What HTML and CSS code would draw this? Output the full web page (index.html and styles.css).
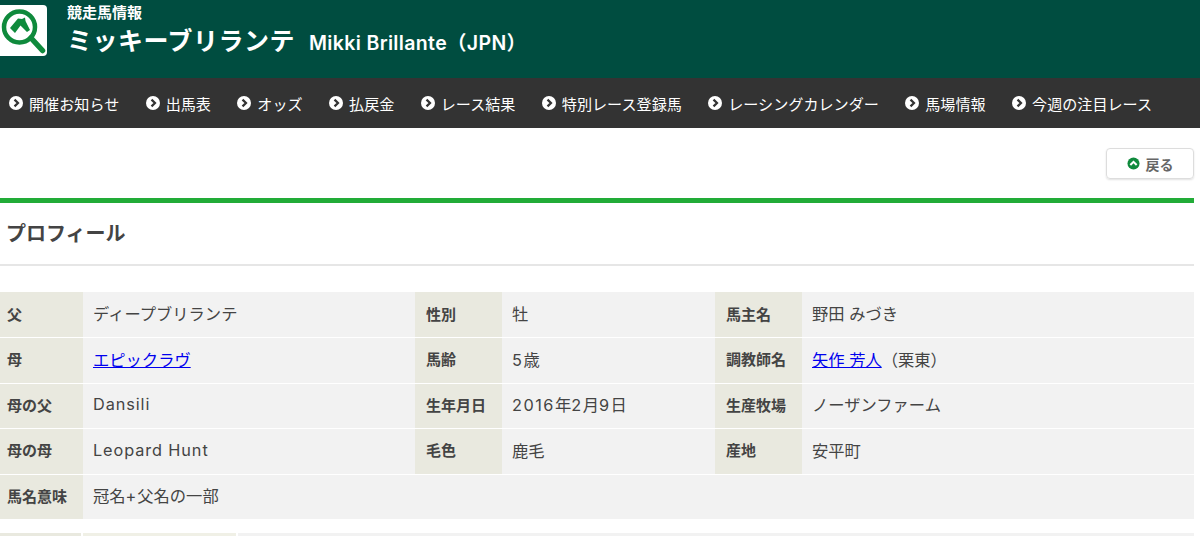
FILE: index.html
```html
<!DOCTYPE html>
<html lang="ja">
<head>
<meta charset="utf-8">
<title>ミッキーブリランテ</title>
<link rel="stylesheet" href="styles.css">
</head>
<body>
<header class="site-header">
  <div class="logo">
    <svg width="47" height="51" viewBox="0 0 47 51">
      <circle cx="19.5" cy="22" r="15.5" fill="none" stroke="#0f8a3c" stroke-width="4.5"/>
      <path d="M31 33 L42.5 45.5" stroke="#0f8a3c" stroke-width="5.5" stroke-linecap="round"/>
      <path d="M10 23 L18 13.5 L22 14 L25 12.5 L25.5 16 L30 25 L27 27 L20.5 20.5 L15 28 Z" fill="#0f8a3c"/>
    </svg>
  </div>
  <div class="titles">
    <div class="subtitle">競走馬情報</div>
    <h1 class="horse"><span class="jp">ミッキーブリランテ</span><span class="en">Mikki Brillante（JPN）</span></h1>
  </div>
</header>
<nav class="nav">
  <a class="nav-item"><svg class="dot" viewBox="0 0 14 14"><circle cx="7" cy="7" r="7" fill="#fff"/><path d="M5.5 3.6 L9 7 L5.5 10.4" fill="none" stroke="#333" stroke-width="2.2"/></svg>開催お知らせ</a>
  <a class="nav-item"><svg class="dot" viewBox="0 0 14 14"><circle cx="7" cy="7" r="7" fill="#fff"/><path d="M5.5 3.6 L9 7 L5.5 10.4" fill="none" stroke="#333" stroke-width="2.2"/></svg>出馬表</a>
  <a class="nav-item"><svg class="dot" viewBox="0 0 14 14"><circle cx="7" cy="7" r="7" fill="#fff"/><path d="M5.5 3.6 L9 7 L5.5 10.4" fill="none" stroke="#333" stroke-width="2.2"/></svg>オッズ</a>
  <a class="nav-item"><svg class="dot" viewBox="0 0 14 14"><circle cx="7" cy="7" r="7" fill="#fff"/><path d="M5.5 3.6 L9 7 L5.5 10.4" fill="none" stroke="#333" stroke-width="2.2"/></svg>払戻金</a>
  <a class="nav-item"><svg class="dot" viewBox="0 0 14 14"><circle cx="7" cy="7" r="7" fill="#fff"/><path d="M5.5 3.6 L9 7 L5.5 10.4" fill="none" stroke="#333" stroke-width="2.2"/></svg>レース結果</a>
  <a class="nav-item"><svg class="dot" viewBox="0 0 14 14"><circle cx="7" cy="7" r="7" fill="#fff"/><path d="M5.5 3.6 L9 7 L5.5 10.4" fill="none" stroke="#333" stroke-width="2.2"/></svg>特別レース登録馬</a>
  <a class="nav-item"><svg class="dot" viewBox="0 0 14 14"><circle cx="7" cy="7" r="7" fill="#fff"/><path d="M5.5 3.6 L9 7 L5.5 10.4" fill="none" stroke="#333" stroke-width="2.2"/></svg>レーシングカレンダー</a>
  <a class="nav-item"><svg class="dot" viewBox="0 0 14 14"><circle cx="7" cy="7" r="7" fill="#fff"/><path d="M5.5 3.6 L9 7 L5.5 10.4" fill="none" stroke="#333" stroke-width="2.2"/></svg>馬場情報</a>
  <a class="nav-item"><svg class="dot" viewBox="0 0 14 14"><circle cx="7" cy="7" r="7" fill="#fff"/><path d="M5.5 3.6 L9 7 L5.5 10.4" fill="none" stroke="#333" stroke-width="2.2"/></svg>今週の注目レース</a>
</nav>
<main class="main">
  <div class="back-row">
    <a class="back"><svg class="back-icon" viewBox="0 0 14 14"><circle cx="7" cy="7" r="6.5" fill="#0f8a3c"/><path d="M3.6 8.6 L7 5.2 L10.4 8.6" fill="none" stroke="#fff" stroke-width="2.2"/></svg>戻る</a>
  </div>
  <section class="profile">
    <h2 class="profile-title">プロフィール</h2>
    <table class="table">
      <colgroup><col class="c1"><col class="c2"><col class="c3"><col class="c4"><col class="c5"><col class="c6"></colgroup>
      <tr><th>父</th><td>ディープブリランテ</td><th>性別</th><td>牡</td><th>馬主名</th><td>野田 みづき</td></tr>
      <tr><th>母</th><td><a class="link">エピックラヴ</a></td><th>馬齢</th><td><span class="num">5</span>歳</td><th>調教師名</th><td><a class="link">矢作 芳人</a>（栗東）</td></tr>
      <tr><th>母の父</th><td><span class="lat">Dansili</span></td><th>生年月日</th><td><span class="num">2016</span>年<span class="num">2</span>月<span class="num">9</span>日</td><th>生産牧場</th><td>ノーザンファーム</td></tr>
      <tr><th>母の母</th><td><span class="lat">Leopard Hunt</span></td><th>毛色</th><td>鹿毛</td><th>産地</th><td>安平町</td></tr>
      <tr><th>馬名意味</th><td colspan="5">冠名<span class="lat">+</span>父名の一部</td></tr>
    </table>
    <div class="next-head">
      <div class="nh1"></div><div class="nh2"></div><div class="nh3"></div>
    </div>
  </section>
</main>
</body>
</html>
```
FILE: styles.css
```css
html, body {
  margin: 0;
  padding: 0;
  height: 536px;
  overflow: hidden;
  background: #fff;
}
body {
  font-family: "Inter", "Noto Sans CJK JP", sans-serif;
  color: #333;
}
.site-header {
  height: 78px;
  background: #004d40;
  display: flex;
  align-items: flex-start;
  box-sizing: border-box;
  padding-top: 5px;
}
.logo {
  width: 47px;
  height: 51px;
  background: #fff;
  border-radius: 0 4px 4px 0;
  flex: none;
}
.titles {
  margin-left: 20px;
  color: #fff;
}
.subtitle {
  font-size: 15px;
  font-weight: 700;
  line-height: 16px;
  margin-bottom: 3px;
}
.horse {
  margin: 0;
  font-weight: 700;
  display: flex;
  align-items: baseline;
  line-height: 34px;
}
.jp {
  font-size: 25px;
  letter-spacing: 0.5px;
}
.en {
  font-size: 19.5px;
  margin-left: 14px;
  font-weight: 600;
  letter-spacing: .35px;
}
.nav {
  height: 50px;
  background: #333;
  display: flex;
  align-items: center;
  padding-left: 9px;
  gap: 26.4px;
}
.nav-item {
  display: flex;
  align-items: center;
  color: #fff;
  font-size: 15.1px;
  white-space: nowrap;
}
.dot {
  width: 14px;
  height: 14px;
  margin-right: 6px;
  flex: none;
}
.main {
  width: 1194px;
}
.back-row {
  display: flex;
  justify-content: flex-end;
  align-items: flex-start;
  padding-top: 20px;
  height: 50px;
}
.back {
  width: 86px;
  height: 29px;
  border: 1px solid #ddd;
  border-radius: 4px;
  box-shadow: 0 1px 2px rgba(0,0,0,.12);
  display: flex;
  align-items: center;
  justify-content: center;
  font-size: 14px;
  font-weight: 700;
  color: #666;
}
.back-icon {
  width: 13px;
  height: 13px;
  margin-right: 6px;
}
.profile {
  border-top: 5px solid #22ac38;
}
.profile-title {
  margin: 0;
  height: 63px;
  line-height: 63px;
  font-size: 20px;
  font-weight: 700;
  padding-left: 6px;
  color: #444;
  border-bottom: 2px solid #e6e6e6;
  box-sizing: border-box;
}
.table {
  margin-top: 26px;
  width: 1194px;
  table-layout: fixed;
  border-collapse: collapse;
  font-size: 16.3px;
}
.c1 { width: 83px; }
.c2 { width: 332px; }
.c3 { width: 87px; }
.c4 { width: 213px; }
.c5 { width: 87px; }
.c6 { width: 392px; }
.table tr {
  height: 45.5px;
  border-bottom: 1px solid #fff;
}
.table th {
  background: #e9e9df;
  text-align: left;
  padding: 0 0 3px 7px;
  font-size: 15px;
  font-weight: 700;
  color: #444;
}
.table td + th {
  padding-left: 11px;
}
.table td {
  background: #f2f2f2;
  padding: 0 0 3px 10px;
  color: #444;
}
.lat {
  letter-spacing: .9px;
}
.num {
  letter-spacing: 1.5px;
}
.link {
  color: #0000ee;
  text-decoration: underline;
}
.next-head {
  margin-top: 13px;
  height: 10px;
  display: grid;
  grid-template-columns: 81px 153px 1fr;
  gap: 2px;
}
.nh1 { background: #e9e9df; }
.nh2 { background: #f0f0e6; }
.nh3 { background: #f2f2f2; }
```
